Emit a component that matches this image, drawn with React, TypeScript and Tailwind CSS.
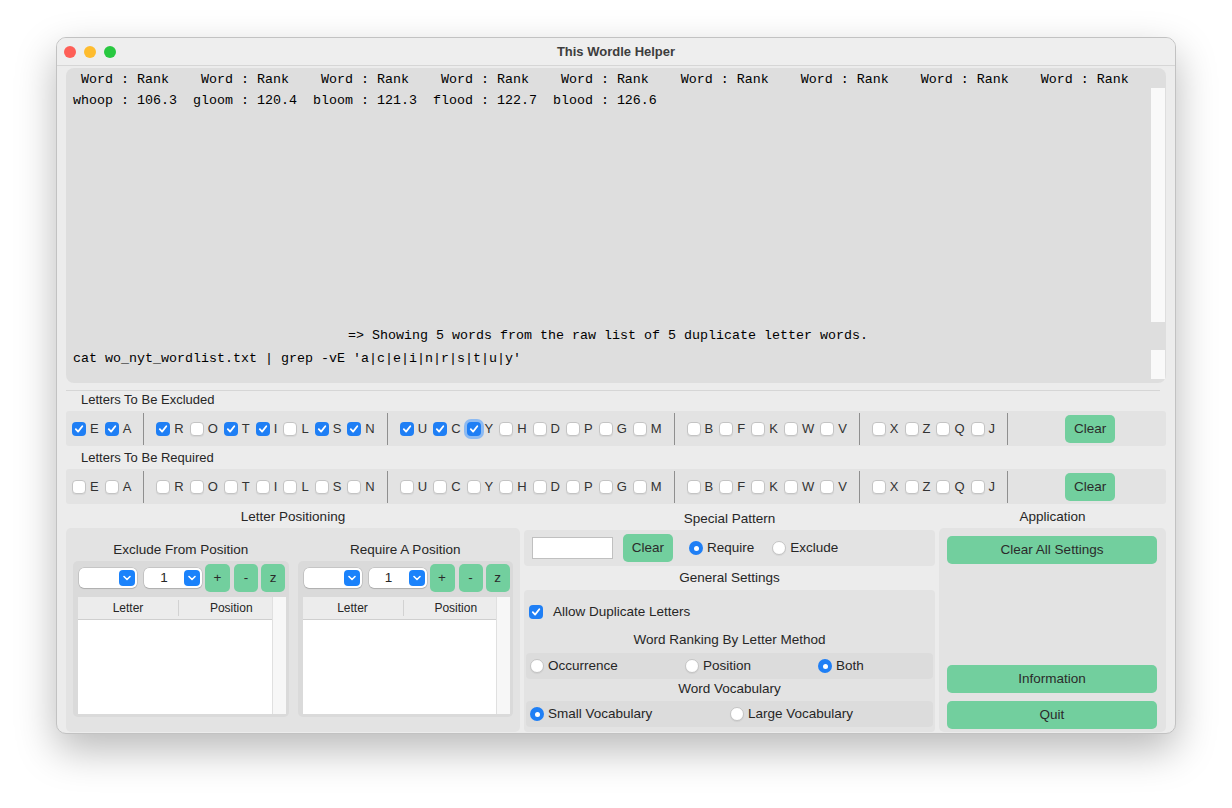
import React from "react";

const groups = [
  ["E", "A"],
  ["R", "O", "T", "I", "L", "S", "N"],
  ["U", "C", "Y", "H", "D", "P", "G", "M"],
  ["B", "F", "K", "W", "V"],
  ["X", "Z", "Q", "J"],
];

const excluded = new Set(["E", "A", "R", "T", "I", "S", "N", "U", "C", "Y"]);
const none = new Set<string>();

const header = Array(9).fill(" Word : Rank   ").join("").trimEnd();
const words = "whoop : 106.3  gloom : 120.4  bloom : 121.3  flood : 122.7  blood : 126.6";

function Check({ checked, focus }: { checked?: boolean; focus?: boolean }) {
  return (
    <span
      className={`flex h-[14px] w-[14px] shrink-0 items-center justify-center rounded-[4px] ${
        checked ? "bg-[#1f7ff5]" : "border border-[#c4c4c4] bg-white shadow-[0_1px_1px_rgba(0,0,0,0.06)]"
      } ${focus ? "ring-[3px] ring-[#8cbaf2]" : ""}`}
    >
      {checked && (
        <svg width="10" height="10" viewBox="0 0 10 10">
          <path
            d="M1.8 5.2 L4.1 7.6 L8.3 2.3"
            fill="none"
            stroke="white"
            strokeWidth="1.8"
            strokeLinecap="round"
            strokeLinejoin="round"
          />
        </svg>
      )}
    </span>
  );
}

function Radio({ on }: { on?: boolean }) {
  return on ? (
    <span className="flex h-[14px] w-[14px] shrink-0 items-center justify-center rounded-full bg-[#1f7ff5]">
      <span className="h-[5px] w-[5px] rounded-full bg-white" />
    </span>
  ) : (
    <span className="h-[14px] w-[14px] shrink-0 rounded-full border border-[#c4c4c4] bg-white shadow-[0_1px_1px_rgba(0,0,0,0.06)]" />
  );
}

function Green({ className = "", children }: { className?: string; children?: React.ReactNode }) {
  return (
    <div className={`flex h-[28px] items-center justify-center rounded-[5px] bg-[#72cf9e] text-[#2b2b2b] ${className}`}>
      {children}
    </div>
  );
}

function Select({ value }: { value?: string }) {
  return (
    <div className="flex h-[20px] w-[58px] items-center rounded-[5px] bg-white shadow-[0_0_0_0.5px_rgba(0,0,0,0.18),0_1px_1px_rgba(0,0,0,0.12)]">
      <span className="flex-1 text-center">{value}</span>
      <span className="mr-[2px] flex h-[16px] w-[16px] items-center justify-center rounded-[4px] bg-[#1a82fb]">
        <svg width="8" height="6" viewBox="0 0 8 6">
          <path d="M1 1.5 L4 4.5 L7 1.5" fill="none" stroke="white" strokeWidth="1.6" strokeLinecap="round" strokeLinejoin="round" />
        </svg>
      </span>
    </div>
  );
}

function LetterRow({ checked, focus }: { checked: Set<string>; focus?: string }) {
  return (
    <div className="flex h-[35px] items-center rounded-[3px] bg-[#e3e3e3] pl-[6px] text-[13px]">
      {groups.map((g, gi) => (
        <div key={gi} className="flex items-center">
          {g.map((l) => (
            <div key={l} className="mr-[6px] flex items-center">
              <Check checked={checked.has(l)} focus={focus === l} />
              <span className="ml-[4px] text-[#333]">{l}</span>
            </div>
          ))}
          <span className="ml-[6px] mr-[12px] h-[32px] w-px bg-[#8f8f8f]" />
        </div>
      ))}
      <div className="flex flex-1 justify-center pr-[6px]">
        <Green className="w-[50px] pt-px text-[13.5px]">Clear</Green>
      </div>
    </div>
  );
}

function PosPanel({ title }: { title: string }) {
  return (
    <div className="flex flex-col">
      <div className="h-[33px] pt-[10px] text-center leading-[23px]">{title}</div>
      <div className="rounded-[5px] bg-[#dadada] pb-[3px] pl-[6px] pr-[3px] pt-[3px]">
        <div className="flex h-[28px] items-center">
          <Select />
          <div className="ml-[7px]">
            <Select value="1" />
          </div>
          <Green className="ml-[3px] w-[25px]">+</Green>
          <Green className="ml-[4px] w-[24px]">-</Green>
          <Green className="ml-[3px] w-[24px]">z</Green>
        </div>
        <div className="-ml-px mt-[5px] flex h-[117px]">
          <div className="flex flex-1 flex-col bg-white">
            <div className="flex h-[23px] border-b border-[#cfcfcf] bg-[#ececec] text-[12px]">
              <div className="my-[3px] flex w-[101px] items-center justify-center border-r border-[#d2d2d2]">Letter</div>
              <div className="flex flex-1 items-center justify-center pl-[12px]">Position</div>
            </div>
          </div>
          <div className="w-[14px] border-l border-[#e0e0e0] bg-[#f7f7f7]" />
        </div>
      </div>
    </div>
  );
}

export default function App() {
  return (
    <div className="h-[808px] w-[1232px] bg-white pl-[56px] pt-[37px] font-['Liberation_Sans',Arial,sans-serif] text-[13.5px] text-[#262626]">
      <div className="flex h-[697px] w-[1120px] flex-col overflow-hidden rounded-[10px] border border-[#c2c2c2] bg-[#ececec] shadow-[0_16px_40px_rgba(0,0,0,0.28)]">
        {/* title bar */}
        <div className="grid h-[28px] shrink-0 grid-cols-[1fr_auto_1fr] items-center border-b border-[#d6d6d6] bg-[#eeeeee]">
          <div className="flex items-center gap-[8px] pl-[7px]">
            <span className="h-[12px] w-[12px] rounded-full bg-[#fe5f57]" />
            <span className="h-[12px] w-[12px] rounded-full bg-[#febc2e]" />
            <span className="h-[12px] w-[12px] rounded-full bg-[#28c840]" />
          </div>
          <div className="text-[13px] font-bold text-[#3d3d3d]">This Wordle Helper</div>
          <div />
        </div>

        <div className="flex flex-1 flex-col px-[9px] pb-px">
          {/* results text */}
          <div className="mt-[2px] flex h-[315px] shrink-0 rounded-[8px] bg-[#dedede]">
            <div className="flex flex-1 flex-col whitespace-pre pl-[7px] pt-px font-['Liberation_Mono',monospace] text-[13.33px] leading-[21px] text-black">
              <div>{header}</div>
              <div>{words}</div>
              <div className="flex-1" />
              <div className="pl-[275px]">{"=> Showing 5 words from the raw list of 5 duplicate letter words."}</div>
              <div className="mb-[14px] mt-[2px]">{"cat wo_nyt_wordlist.txt | grep -vE 'a|c|e|i|n|r|s|t|u|y'"}</div>
            </div>
            <div className="mr-px flex w-[14px] flex-col pt-[20px]">
              <div className="h-[234px] bg-[#f9f9f9]" />
              <div className="mt-[28px] h-[29px] bg-[#f9f9f9]" />
            </div>
          </div>

          <div className="mr-[6px] mt-[7px] h-px shrink-0 bg-[#d6d6d6]" />

          <div className="h-[20px] pl-[15px] text-[13px] leading-[17px]">Letters To Be Excluded</div>
          <LetterRow checked={excluded} focus="Y" />
          <div className="h-[23px] pl-[15px] text-[13px] leading-[23px]">Letters To Be Required</div>
          <LetterRow checked={none} />

          {/* bottom panels */}
          <div className="mt-[3px] grid flex-1 grid-cols-[454px_411px_227px] gap-[4px]">
            <div className="flex flex-col">
              <div className="h-[21px] text-center leading-[20px]">Letter Positioning</div>
              <div className="grid flex-1 grid-cols-2 gap-[9px] rounded-[5px] bg-[#e3e3e3] px-[7px]">
                <PosPanel title="Exclude From Position" />
                <PosPanel title="Require A Position" />
              </div>
            </div>

            <div className="flex flex-col">
              <div className="h-[23px] text-center leading-[24px]">Special Pattern</div>
              <div className="flex h-[36px] items-center rounded-[4px] bg-[#e3e3e3] pl-[8px]">
                <div className="h-[22px] w-[81px] border border-[#c0c0c0] bg-white" />
                <Green className="ml-[10px] w-[50px]">Clear</Green>
                <div className="ml-[16px] flex items-center">
                  <Radio on />
                  <span className="ml-[4px]">Require</span>
                </div>
                <div className="ml-[18px] flex items-center">
                  <Radio />
                  <span className="ml-[4px]">Exclude</span>
                </div>
              </div>
              <div className="h-[24px] text-center leading-[24px]">General Settings</div>
              <div className="flex flex-1 flex-col rounded-[4px] bg-[#e3e3e3] px-[2px] pt-[8px]">
                <div className="flex h-[28px] items-center pl-[3px]">
                  <Check checked />
                  <span className="ml-[10px]">Allow Duplicate Letters</span>
                </div>
                <div className="mt-[4px] h-[20px] text-center leading-[20px]">Word Ranking By Letter Method</div>
                <div className="mt-[3px] flex h-[26px] items-center rounded-[4px] bg-[#dcdcdc] pl-[4px]">
                  <div className="flex w-[155px] items-center">
                    <Radio />
                    <span className="ml-[4px]">Occurrence</span>
                  </div>
                  <div className="flex w-[133px] items-center">
                    <Radio />
                    <span className="ml-[4px]">Position</span>
                  </div>
                  <div className="flex items-center">
                    <Radio on />
                    <span className="ml-[4px]">Both</span>
                  </div>
                </div>
                <div className="h-[20px] text-center leading-[20px]">Word Vocabulary</div>
                <div className="mt-[2px] flex h-[26px] items-center rounded-[4px] bg-[#dcdcdc] pl-[4px]">
                  <div className="flex w-[200px] items-center">
                    <Radio on />
                    <span className="ml-[4px]">Small Vocabulary</span>
                  </div>
                  <div className="flex items-center">
                    <Radio />
                    <span className="ml-[4px]">Large Vocabulary</span>
                  </div>
                </div>
              </div>
            </div>

            <div className="flex flex-col">
              <div className="h-[21px] text-center leading-[20px]">Application</div>
              <div className="flex flex-1 flex-col rounded-[5px] bg-[#e3e3e3] pb-[3px] pl-[8px] pr-[9px] pt-[8px]">
                <Green>Clear All Settings</Green>
                <div className="flex-1" />
                <Green>Information</Green>
                <Green className="mt-[8px]">Quit</Green>
              </div>
            </div>
          </div>
        </div>
      </div>
    </div>
  );
}
